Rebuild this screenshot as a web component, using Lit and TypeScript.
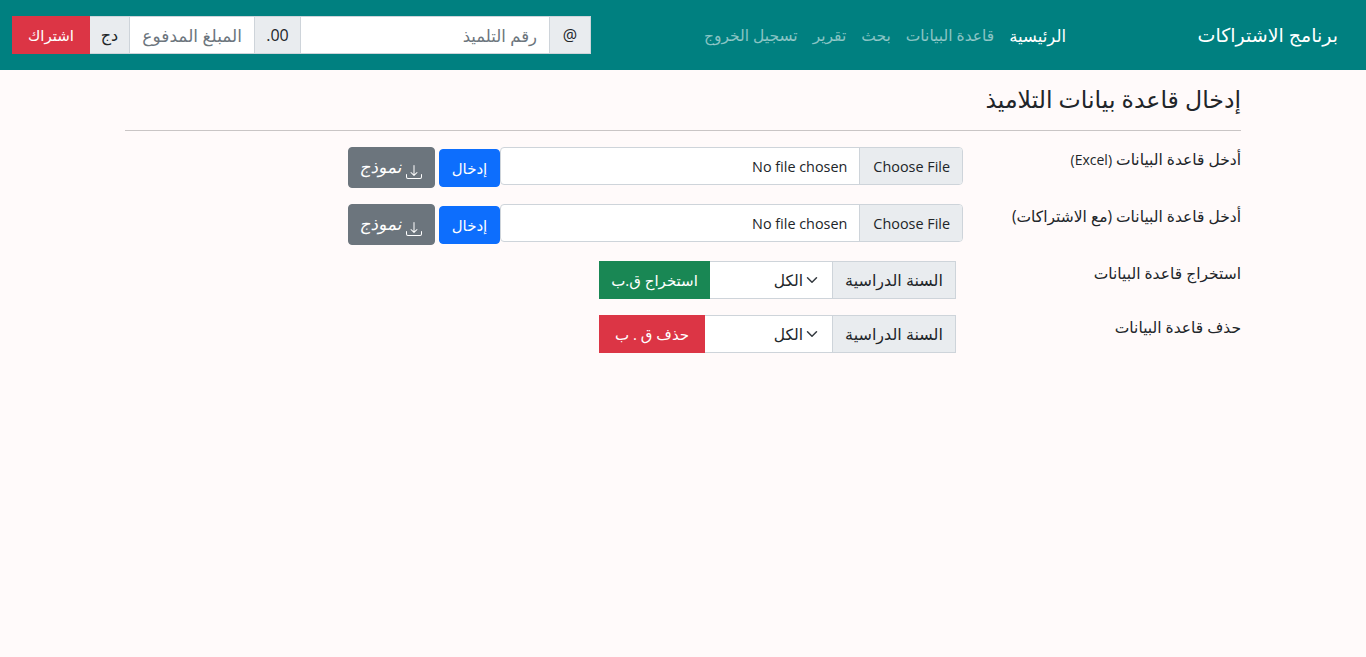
import { LitElement, html, css } from 'lit';
import { customElement } from 'lit/decorators.js';

const chevron =
  "url(\"data:image/svg+xml,%3csvg xmlns='http://www.w3.org/2000/svg' viewBox='0 0 16 16'%3e%3cpath fill='none' stroke='%23343a40' stroke-linecap='round' stroke-linejoin='round' stroke-width='2' d='M2 5l6 6 6-6'/%3e%3c/svg%3e\")";

const NAV_LINKS = ['قاعدة البيانات', 'بحث', 'تقرير', 'تسجيل الخروج'];

function chevronCss() {
  return css([chevron] as unknown as TemplateStringsArray);
}

@customElement('app-root')
export class AppRoot extends LitElement {
  private _yearSelect(cls: string) {
    return html`
      <div class="group year ${cls}">
        <span class="addon year-label">السنة الدراسية</span>
        <select class="select" aria-label="السنة الدراسية">
          <option>الكل</option>
        </select>
        ${cls === 'extract'
          ? html`<button class="btn success">استخراج ق.ب</button>`
          : html`<button class="btn danger">حذف ق . ب</button>`}
      </div>
    `;
  }

  private _fileRow(label: unknown) {
    return html`
      <div class="row file-row">
        <label class="label">${label}</label>
        <div class="file-wrap">
          <input class="file" type="file" />
          <button class="btn primary">إدخال</button>
        </div>
        <button class="btn sample">
          <svg width="16" height="16" viewBox="0 0 16 16" fill="currentColor">
            <path d="M.5 9.9a.5.5 0 0 1 .5.5v2.5a1 1 0 0 0 1 1h12a1 1 0 0 0 1-1v-2.5a.5.5 0 0 1 1 0v2.5a2 2 0 0 1-2 2H2a2 2 0 0 1-2-2v-2.5a.5.5 0 0 1 .5-.5z" />
            <path d="M7.646 11.854a.5.5 0 0 0 .708 0l3-3a.5.5 0 0 0-.708-.708L8.5 10.293V1.5a.5.5 0 0 0-1 0v8.793L5.354 8.146a.5.5 0 1 0-.708.708l3 3z" />
          </svg>
          <em>نموذج</em>
        </button>
      </div>
    `;
  }

  protected override render() {
    return html`
      <div class="page" dir="rtl">
        <nav class="navbar">
          <a class="brand">برنامج الاشتراكات</a>
          <ul class="links">
            <li class="active">الرئيسية</li>
            ${NAV_LINKS.map((l) => html`<li>${l}</li>`)}
          </ul>
          <form class="sub-form">
            <span class="addon at">@</span>
            <input class="text id" placeholder="رقم التلميذ" />
            <span class="addon cents">00.</span>
            <input class="text amount" placeholder="المبلغ المدفوع" />
            <span class="addon da">دج</span>
            <button class="btn danger subscribe" type="button">اشتراك</button>
          </form>
        </nav>

        <main class="container">
          <h4 class="title">إدخال قاعدة بيانات التلاميذ</h4>
          <hr />
          ${this._fileRow(html`أدخل قاعدة البيانات <span class="latin">(Excel)</span>`)}
          ${this._fileRow('أدخل قاعدة البيانات (مع الاشتراكات)')}
          <div class="row year-row">
            <label class="label">استخراج قاعدة البيانات</label>
            ${this._yearSelect('extract')}
          </div>
          <div class="row year-row last">
            <label class="label">حذف قاعدة البيانات</label>
            ${this._yearSelect('remove')}
          </div>
        </main>
      </div>
    `;
  }

  static override styles = css`
    :host {
      display: block;
      font-family: 'Open Sans', 'DejaVu Sans', sans-serif;
      font-size: 15.5px;
      color: #212529;
    }
    * {
      box-sizing: border-box;
    }
    .page {
      min-height: 657px;
      background: #fffafa;
    }
    .navbar {
      display: flex;
      align-items: center;
      height: 70px;
      background: #008080;
      padding: 0 28px 0 12px;
    }
    .brand {
      width: 141px;
      font-size: 19px;
      color: #fff;
      white-space: nowrap;
      margin-left: 131px;
    }
    .links {
      display: flex;
      gap: 15px;
      list-style: none;
      margin: 1px 0 0;
      padding: 0;
      white-space: nowrap;
      font-size: 15.5px;
      color: rgba(255, 255, 255, 0.55);
    }
    .links .active {
      color: #fff;
      font-size: 16.5px;
    }
    .sub-form {
      display: flex;
      margin-right: auto;
      height: 38px;
    }
    .addon {
      display: flex;
      align-items: center;
      justify-content: center;
      background: #e9ecef;
      border: 1px solid #ced4da;
      white-space: nowrap;
    }
    .at {
      width: 42px;
      font-size: 16px;
    }
    .cents {
      width: 47px;
      margin-right: -1px;
      font-size: 16px;
    }
    .da {
      width: 41px;
      margin-right: -1px;
      font-size: 16px;
    }
    .text {
      font: inherit;
      font-size: 16.5px;
      height: 38px;
      padding: 0 12px;
      background: #fff;
      border: 1px solid #ced4da;
      margin-right: -1px;
      outline: none;
      min-width: 0;
    }
    .text::placeholder {
      color: #6c757d;
    }
    .id {
      width: 250px;
    }
    .amount {
      width: 126px;
      font-size: 17px;
    }
    .btn {
      font: inherit;
      font-size: 15px;
      color: #fff;
      border: 1px solid transparent;
      display: inline-flex;
      align-items: center;
      justify-content: center;
      white-space: nowrap;
      padding: 0 12px;
    }
    .danger {
      background: #dc3545;
      border-color: #dc3545;
    }
    .success {
      background: #198754;
      border-color: #198754;
    }
    .primary {
      background: #0d6efd;
      border-color: #0d6efd;
      border-radius: 4px;
    }
    .subscribe {
      width: 78px;
      margin-right: -1px;
      padding: 0;
    }
    .container {
      width: 1116px;
      margin: 0 auto;
    }
    .title {
      margin: 0;
      padding-top: 15px;
      height: 60px;
      font-size: 23.6px;
      font-weight: 400;
      line-height: 28px;
    }
    hr {
      margin: 0 0 16px;
      border: 0;
      border-top: 1px solid #c9c5c5;
    }
    .row {
      display: flex;
      align-items: flex-start;
    }
    .label {
      flex: none;
      padding-top: 2px;
      line-height: 20px;
      white-space: nowrap;
    }
    .latin {
      font-size: 14px;
    }
    .file-row {
      height: 57px;
    }
    .file-row .label {
      width: 278px;
    }
    .year-row {
      height: 54px;
    }
    .year-row .label {
      width: 285px;
    }
    .file-wrap {
      display: flex;
      align-items: flex-start;
      width: 524px;
    }
    .file {
      font: inherit;
      font-size: 14.4px;
      flex: 1;
      min-width: 0;
      height: 38px;
      color: #212529;
      background: #fff;
      border: 1px solid #ced4da;
      border-radius: 4px;
      overflow: hidden;
    }
    .file::file-selector-button {
      font: inherit;
      height: 38px;
      padding: 0 13px;
      margin: -1px -1px -1px 12px;
      color: #212529;
      background: #e9ecef;
      border: 0;
      border-left: 1px solid #ced4da;
      border-radius: 0;
    }
    .file-wrap .primary {
      width: 61px;
      height: 38px;
      margin-top: 2px;
      padding: 0;
      position: relative;
    }
    .sample {
      width: 87px;
      height: 41px;
      margin-right: 4px;
      padding: 0;
      gap: 4px;
      background: #6c757d;
      border-color: #6c757d;
      border-radius: 4px;
      font-size: 17px;
    }
    .sample svg {
      flex: none;
      margin-top: 9px;
    }
    .sample em {
      display: inline-block;
      font-style: normal;
      transform: skewX(-12deg);
      margin-top: -3px;
    }
    .group.year {
      display: flex;
      width: 357px;
      height: 38px;
    }
    .year-label {
      width: 124px;
      flex: none;
      font-size: 16px;
    }
    .select {
      font: inherit;
      font-size: 15.5px;
      flex: 1;
      min-width: 0;
      height: 38px;
      margin-right: -1px;
      padding: 0 29px 0 12px;
      color: #212529;
      background: #fff ${chevronCss()} no-repeat right 14px center / 12px 12px;
      border: 1px solid #ced4da;
      border-radius: 0;
      appearance: none;
      outline: none;
    }
    .group .btn {
      flex: none;
      height: 38px;
      margin-right: -1px;
    }
    .extract .btn {
      width: 111px;
      padding: 0;
    }
    .remove .btn {
      width: 106px;
      padding: 0;
    }
  `;
}
